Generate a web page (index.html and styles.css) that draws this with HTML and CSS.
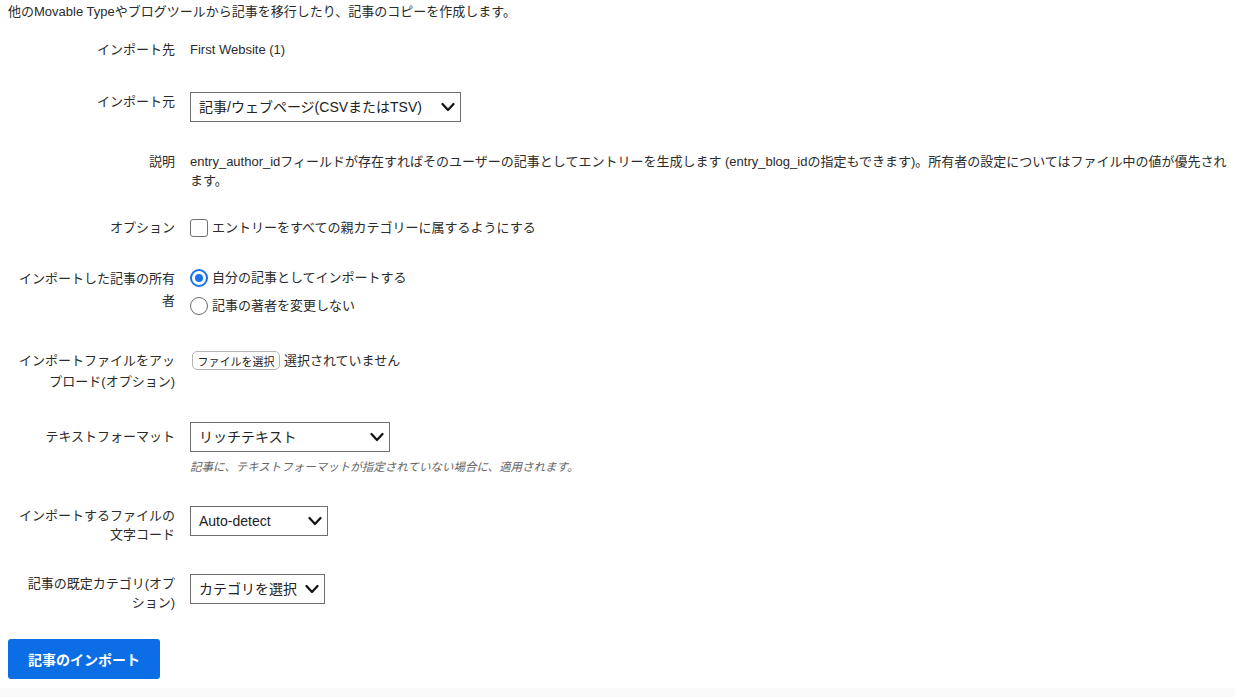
FILE: index.html
```html
<!DOCTYPE html>
<html lang="ja">
<head>
  <meta charset="UTF-8" />
  <title>記事のインポート</title>
  <link rel="stylesheet" href="styles.css">
</head>
<body>
  <div class="page">
    <p class="intro">他のMovable Typeやブログツールから記事を移行したり、記事のコピーを作成します。</p>

    <div class="row row-first">
      <div class="label">インポート先</div>
      <div class="field">First Website (1)</div>
    </div>

    <div class="row">
      <div class="label">インポート元</div>
      <div class="field">
        <span class="select sel-source">
          <span class="select-text">記事/ウェブページ(CSVまたはTSV)</span>
          <svg class="chev" width="14" height="10" viewBox="0 0 14 10"><path d="M1.5 2 L7 8 L12.5 2" fill="none" stroke="#111" stroke-width="2.2" stroke-linecap="round" stroke-linejoin="round"/></svg>
        </span>
      </div>
    </div>

    <div class="row row-desc">
      <div class="label lh19">説明</div>
      <div class="field lh19">entry_author_idフィールドが存在すればそのユーザーの記事としてエントリーを生成します (entry_blog_idの指定もできます)。所有者の設定についてはファイル中の値が優先され<br>ます。</div>
    </div>

    <div class="row">
      <div class="label">オプション</div>
      <div class="field">
        <label class="check"><span class="box"></span>エントリーをすべての親カテゴリーに属するようにする</label>
      </div>
    </div>

    <div class="row row-owner">
      <div class="label lh22">インポートした記事の所有者</div>
      <div class="field">
        <label class="radio"><span class="dot on"></span>自分の記事としてインポートする</label>
        <label class="radio"><span class="dot"></span>記事の著者を変更しない</label>
      </div>
    </div>

    <div class="row">
      <div class="label lh21">インポートファイルをアップロード(オプション)</div>
      <div class="field file">
        <button class="file-btn">ファイルを選択</button>
        <span>選択されていません</span>
      </div>
    </div>

    <div class="row">
      <div class="label pad">テキストフォーマット</div>
      <div class="field">
        <span class="select sel-format">
          <span class="select-text">リッチテキスト</span>
          <svg class="chev" width="14" height="10" viewBox="0 0 14 10"><path d="M1.5 2 L7 8 L12.5 2" fill="none" stroke="#111" stroke-width="2.2" stroke-linecap="round" stroke-linejoin="round"/></svg>
        </span>
        <div class="hint">記事に、テキストフォーマットが指定されていない場合に、適用されます。</div>
      </div>
    </div>

    <div class="row">
      <div class="label lh19">インポートするファイルの文字コード</div>
      <div class="field">
        <span class="select sel-charset">
          <span class="select-text">Auto-detect</span>
          <svg class="chev" width="14" height="10" viewBox="0 0 14 10"><path d="M1.5 2 L7 8 L12.5 2" fill="none" stroke="#111" stroke-width="2.2" stroke-linecap="round" stroke-linejoin="round"/></svg>
        </span>
      </div>
    </div>

    <div class="row row-last">
      <div class="label lh19">記事の既定カテゴリ(オプション)</div>
      <div class="field">
        <span class="select sel-cat">
          <span class="select-text">カテゴリを選択</span>
          <svg class="chev" width="14" height="10" viewBox="0 0 14 10"><path d="M1.5 2 L7 8 L12.5 2" fill="none" stroke="#111" stroke-width="2.2" stroke-linecap="round" stroke-linejoin="round"/></svg>
        </span>
      </div>
    </div>

    <button class="submit">記事のインポート</button>
  </div>
  <div class="foot"></div>
</body>
</html>
```

FILE: styles.css
```css
* { box-sizing: border-box; }
body {
  margin: 0;
  background: #fff;
  color: #2b2b2b;
  font-family: "Liberation Sans", "Noto Sans CJK JP", sans-serif;
  font-size: 13px;
  line-height: 20px;
}
.page {
  padding: 2px 8px 0;
}
.intro {
  margin: 0 0 18px;
}
.row {
  display: flex;
  gap: 15px;
  margin-bottom: 30px;
}
.row-first { margin-bottom: 32px; }
.row-desc { margin-bottom: 28px; }
.row-owner { margin-bottom: 34px; }
.row-last { margin-bottom: 27px; }
.label {
  width: 158px;
  margin-left: 9px;
  flex-shrink: 0;
  text-align: right;
}
.label.pad { padding-top: 5px; }
.lh19 { line-height: 19px; }
.lh21 { line-height: 21px; }
.lh22 { line-height: 22px; }
.field {
  flex: 1;
  min-width: 0;
}

/* selects */
.select {
  position: relative;
  display: flex;
  align-items: center;
  height: 30px;
  padding-left: 8px;
  border: 1px solid #6e6e6e;
  background: #fff;
  font-size: 14px;
  color: #222;
}
.sel-source { width: 271px; }
.sel-format { width: 200px; }
.sel-charset { width: 138px; }
.sel-cat { width: 135px; }
.chev {
  position: absolute;
  right: 5px;
  top: 9px;
}

/* checkbox + radio */
.check, .radio {
  display: flex;
  align-items: center;
}
.radio + .radio { margin-top: 8px; }
.box {
  width: 18px;
  height: 18px;
  margin-right: 4px;
  border: 1px solid #707070;
  border-radius: 3px;
  background: #fff;
}
.dot {
  width: 18px;
  height: 18px;
  margin-right: 4px;
  border: 1px solid #6a6a6a;
  border-radius: 50%;
  background: #fff;
  position: relative;
}
.dot.on {
  border: 2px solid #1a73e8;
}
.dot.on::after {
  content: "";
  position: absolute;
  left: 3px;
  top: 3px;
  width: 8px;
  height: 8px;
  border-radius: 50%;
  background: #1a73e8;
}

/* file input */
.file {
  display: flex;
  align-items: center;
  height: 21px;
}
.file-btn {
  height: 19px;
  width: 88px;
  margin: 0 4px 0 2px;
  padding: 0;
  font-family: inherit;
  font-size: 11px;
  color: #222;
  background: #fff;
  border: 1px solid #b5b5b5;
  border-radius: 5px;
}

.hint {
  margin-top: 6px;
  font-size: 11.5px;
  line-height: 18px;
  font-style: italic;
  color: #666;
}

.submit {
  display: block;
  width: 152px;
  height: 40px;
  border: 0;
  border-radius: 3px;
  background: #0b6ee4;
  color: #fff;
  font-family: inherit;
  font-size: 14px;
  font-weight: bold;
}
.foot {
  height: 20px;
  margin-top: 9px;
  background: #f9f9f9;
}
```
